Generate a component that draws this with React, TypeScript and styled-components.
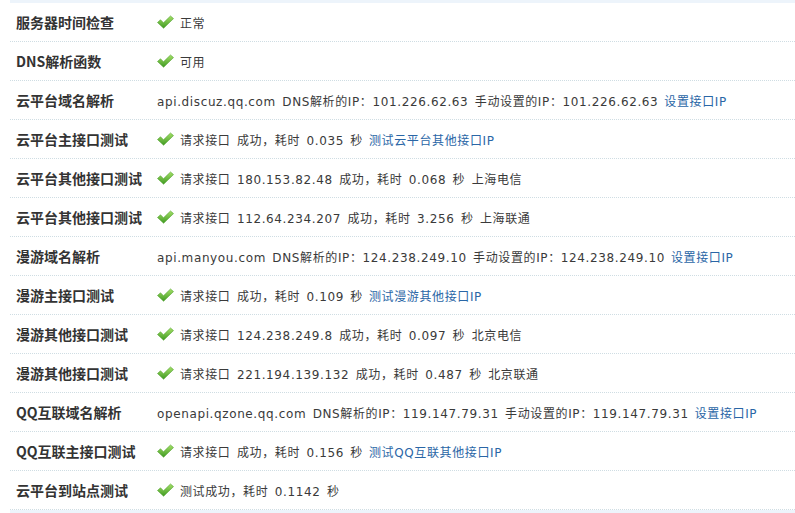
import React from "react";
import styled, { createGlobalStyle } from "styled-components";

const Global = createGlobalStyle`
  html, body { margin: 0; padding: 0; background: #fff; }
  body { font-family: "DejaVu Sans", "Noto Sans CJK SC", sans-serif; }
`;

const Page = styled.div`
  padding-left: 10px;
  width: 785px;
`;

const Strip = styled.div`
  height: 3px;
  background: #edf4fb;
`;

const Row = styled.div`
  display: flex;
  align-items: center;
  height: 38px;
  border-bottom: 1px dotted #cfdde3;
`;

const Label = styled.div`
  width: 141px;
  padding-left: 6px;
  font-family: "Noto Sans CJK SC", "DejaVu Sans", sans-serif;
  font-weight: 700;
  font-size: 14px;
  color: #333;
  white-space: nowrap;
`;

const Value = styled.div`
  display: flex;
  align-items: center;
  font-size: 12px;
  color: #3a3a3a;
  white-space: pre;
  letter-spacing: 0.62px;
  word-spacing: 2px;
`;

const Text = styled.span`
  font-family: "DejaVu Sans", "Noto Sans CJK SC", sans-serif;
`;

const Link = styled.a`
  color: #2a66a6;
  text-decoration: none;
  margin-left: 6px;
`;

const CheckSvg = styled.svg`
  width: 17px;
  height: 14px;
  margin-right: 6px;
  flex: none;
`;

const Check = () => (
  <CheckSvg viewBox="0 0 17 14">
    <defs>
      <linearGradient id="g" x1="0" y1="0" x2="0" y2="1">
        <stop offset="0" stopColor="#a5e067" />
        <stop offset="1" stopColor="#3f9a22" />
      </linearGradient>
    </defs>
    <path
      d="M0.5 7.5 L3.5 4.8 L6.5 7.8 L13.5 1 L16.5 3.6 L6.6 13.2 Z"
      fill="url(#g)"
      stroke="#4d9f2a"
      strokeWidth="0.6"
      strokeLinejoin="round"
    />
  </CheckSvg>
);

type RowData = {
  label: string;
  ok?: boolean;
  text: string;
  link?: string;
};

const rows: RowData[] = [
  { label: "服务器时间检查", ok: true, text: "正常" },
  { label: "DNS解析函数", ok: true, text: "可用" },
  {
    label: "云平台域名解析",
    text: "api.discuz.qq.com DNS解析的IP：101.226.62.63 手动设置的IP：101.226.62.63",
    link: "设置接口IP",
  },
  { label: "云平台主接口测试", ok: true, text: "请求接口 成功，耗时 0.035 秒", link: "测试云平台其他接口IP" },
  { label: "云平台其他接口测试", ok: true, text: "请求接口 180.153.82.48 成功，耗时 0.068 秒 上海电信" },
  { label: "云平台其他接口测试", ok: true, text: "请求接口 112.64.234.207 成功，耗时 3.256 秒 上海联通" },
  {
    label: "漫游域名解析",
    text: "api.manyou.com DNS解析的IP：124.238.249.10 手动设置的IP：124.238.249.10",
    link: "设置接口IP",
  },
  { label: "漫游主接口测试", ok: true, text: "请求接口 成功，耗时 0.109 秒", link: "测试漫游其他接口IP" },
  { label: "漫游其他接口测试", ok: true, text: "请求接口 124.238.249.8 成功，耗时 0.097 秒 北京电信" },
  { label: "漫游其他接口测试", ok: true, text: "请求接口 221.194.139.132 成功，耗时 0.487 秒 北京联通" },
  {
    label: "QQ互联域名解析",
    text: "openapi.qzone.qq.com DNS解析的IP：119.147.79.31 手动设置的IP：119.147.79.31",
    link: "设置接口IP",
  },
  { label: "QQ互联主接口测试", ok: true, text: "请求接口 成功，耗时 0.156 秒", link: "测试QQ互联其他接口IP" },
  { label: "云平台到站点测试", ok: true, text: "测试成功，耗时 0.1142 秒" },
];

export default function App() {
  return (
    <Page>
      <Global />
      <Strip />
      {rows.map((r, i) => (
        <Row key={i}>
          <Label>{r.label}</Label>
          <Value>
            {r.ok && <Check />}
            <Text>{r.text}</Text>
            {r.link && <Link href="#">{r.link}</Link>}
          </Value>
        </Row>
      ))}
      <Strip />
    </Page>
  );
}
